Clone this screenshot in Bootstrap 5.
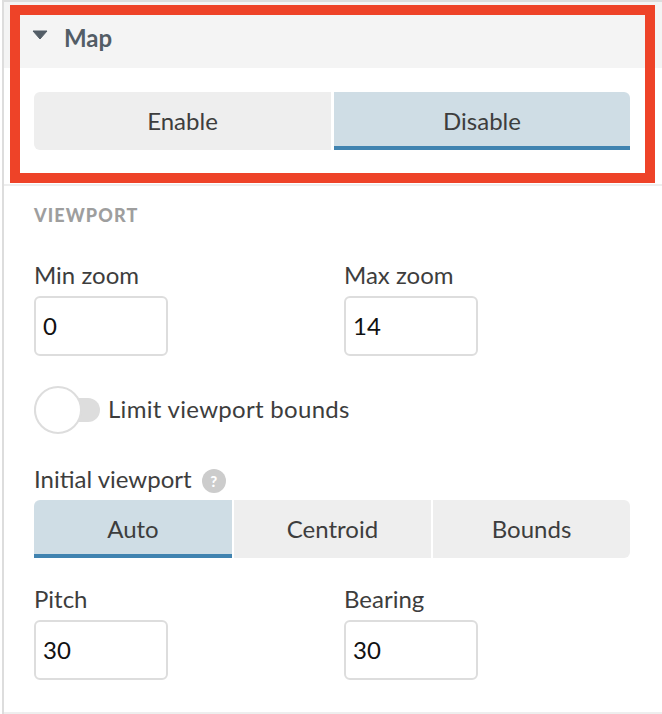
<!DOCTYPE html>
<html lang="en">
<head>
  <meta charset="UTF-8" />
  <title>Map settings</title>
  <link href="https://cdn.jsdelivr.net/npm/bootstrap@5.3.0/dist/css/bootstrap.min.css" rel="stylesheet"/>
  <style>
    body {
      background-color: #fff;
      font-family: "Lato", "Noto Sans", sans-serif;
      color: #3d3d3d;
      font-size: 24px;
      overflow: hidden;
    }
    .panel-wrap {
      position: relative;
      height: 714px;
      border-top: 2px solid #ddd;
      border-left: 2px solid #ddd;
      margin-left: 2px;
    }
    .map-head {
      height: 66px;
      background-color: #f4f4f4;
      padding-left: 28px;
      gap: 16px;
      color: #535d66;
      font-weight: 700;
      font-size: 24px;
    }
    .map-head span { padding-top: 5px; }
    .map-body {
      padding: 24px 32px 34px 30px;
      border-bottom: 2px solid #eee;
    }
    .seg-group {
      display: grid;
      height: 58px;
    }
    .seg-two { grid-template-columns: 297px 296px; gap: 3px; }
    .seg-three { grid-template-columns: 198px 197px 197px; gap: 2px; }
    .seg-btn {
      background-color: #eee;
      color: #3d3d3d;
      font-size: 24px;
      line-height: 1;
      border: 0;
      border-radius: 0;
      padding: 0;
    }
    .seg-btn:first-child { border-top-left-radius: 6px; border-bottom-left-radius: 6px; }
    .seg-btn:last-child { border-top-right-radius: 6px; border-bottom-right-radius: 6px; }
    .seg-btn.is-on,
    .seg-btn.is-on:hover {
      background-color: #cfdde5;
      border-bottom: 4px solid #4083b0;
      border-bottom-left-radius: 0;
      border-bottom-right-radius: 0;
      padding-top: 4px;
    }
    .view-body {
      padding: 15px 32px 0 30px;
      height: 528px;
      border-bottom: 2px solid #eee;
    }
    .view-title {
      color: #9e9e9e;
      font-size: 18px;
      font-weight: 900;
      letter-spacing: 1.1px;
      line-height: 28px;
      margin-bottom: 30px;
    }
    .two-cols {
      display: grid;
      grid-template-columns: 310px 1fr;
    }
    .field-label {
      display: block;
      line-height: 32px;
      margin-bottom: 5px;
    }
    .num-input {
      display: block;
      width: 134px;
      height: 60px;
      border: 2px solid #ddd;
      border-radius: 6px;
      padding: 0 7px 2px;
      font-size: 24px;
      color: #111;
    }
    .switch-row {
      margin-top: 30px;
      margin-bottom: 30px;
      height: 48px;
      gap: 8px;
    }
    .switch-label { letter-spacing: 0.3px; padding-bottom: 2px; }
    .switch-track {
      position: relative;
      width: 66px;
      height: 24px;
      background-color: #ddd;
      border-radius: 12px;
    }
    .switch-knob {
      position: absolute;
      left: 0;
      top: -12px;
      width: 48px;
      height: 48px;
      background-color: #fff;
      border: 2px solid #ddd;
      border-radius: 50%;
    }
    .help-dot {
      display: inline-flex;
      align-items: center;
      justify-content: center;
      width: 24px;
      height: 24px;
      margin-left: 4px;
      border-radius: 50%;
      background-color: #ccc;
      color: #fff;
      font-size: 15px;
      font-weight: 900;
      vertical-align: 1px;
    }
    .init-label { height: 36px; line-height: 30px; }
    .pitch-row { margin-top: 25px; }
    .red-box {
      position: absolute;
      left: 6px;
      top: 3px;
      width: 645px;
      height: 178px;
      border: 10px solid #ee4328;
      pointer-events: none;
    }
  </style>
</head>
<body>
  <div class="panel-wrap">
    <div class="map-head d-flex align-items-center">
      <svg width="16" height="10" viewBox="0 0 16 10"><path d="M1 1h14L8 9z" fill="#535d66" stroke="#535d66" stroke-linejoin="round"/></svg>
      <span>Map</span>
    </div>
    <div class="map-body">
      <div class="seg-group seg-two">
        <button class="btn seg-btn" type="button">Enable</button>
        <button class="btn seg-btn is-on" type="button">Disable</button>
      </div>
    </div>
    <div class="view-body">
      <div class="view-title">VIEWPORT</div>
      <div class="two-cols">
        <div>
          <label class="field-label">Min zoom</label>
          <input class="num-input" type="text" value="0"/>
        </div>
        <div>
          <label class="field-label">Max zoom</label>
          <input class="num-input" type="text" value="14"/>
        </div>
      </div>
      <div class="switch-row d-flex align-items-center">
        <div class="switch-track"><div class="switch-knob"></div></div>
        <span class="switch-label">Limit viewport bounds</span>
      </div>
      <div class="init-label">Initial viewport <span class="help-dot">?</span></div>
      <div class="seg-group seg-three">
        <button class="btn seg-btn is-on" type="button">Auto</button>
        <button class="btn seg-btn" type="button">Centroid</button>
        <button class="btn seg-btn" type="button">Bounds</button>
      </div>
      <div class="two-cols pitch-row">
        <div>
          <label class="field-label">Pitch</label>
          <input class="num-input" type="text" value="30"/>
        </div>
        <div>
          <label class="field-label">Bearing</label>
          <input class="num-input" type="text" value="30"/>
        </div>
      </div>
    </div>
    <div class="red-box"></div>
  </div>
  <script src="https://cdn.jsdelivr.net/npm/bootstrap@5.3.0/dist/js/bootstrap.bundle.min.js"></script>
</body>
</html>
